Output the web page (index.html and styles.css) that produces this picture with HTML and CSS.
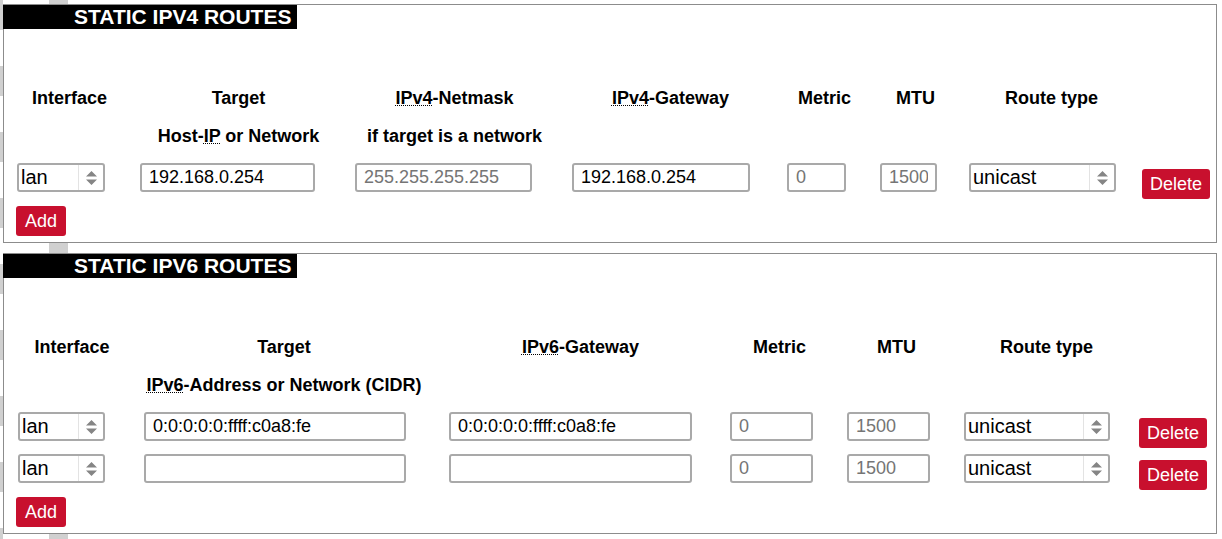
FILE: index.html
```html
<!DOCTYPE html>
<html lang="en">
<head>
<meta charset="utf-8">
<title>Static Routes</title>
<link rel="stylesheet" href="styles.css">
</head>
<body>
<div class="page">
  <section class="box">
    <h2 class="legend">STATIC IPV4 ROUTES</h2>
    <div class="grid g4">
      <div class="th">Interface</div>
      <div class="th">Target</div>
      <div class="th"><abbr title="Internet Protocol Version 4">IPv4</abbr>-Netmask</div>
      <div class="th"><abbr title="Internet Protocol Version 4">IPv4</abbr>-Gateway</div>
      <div class="th">Metric</div>
      <div class="th">MTU</div>
      <div class="th th-rt4">Route type</div>
      <div class="th"></div>

      <div class="th"></div>
      <div class="th">Host-<abbr title="Internet Protocol Address">IP</abbr> or Network</div>
      <div class="th">if target is a network</div>
      <div class="th"></div>
      <div class="th"></div>
      <div class="th"></div>
      <div class="th"></div>
      <div class="th"></div>

      <div class="sel w-if4"><span class="sel-val">lan</span><span class="sel-arr"><svg width="11" height="16" viewBox="0 0 11 16"><path d="M0 6.5 L5.5 1 L11 6.5 Z M0 9.5 L11 9.5 L5.5 15 Z" fill="#858585"/></svg></span></div>
      <input class="inp w-t4" type="text" value="192.168.0.254">
      <input class="inp w-nm4" type="text" placeholder="255.255.255.255">
      <input class="inp w-gw4" type="text" value="192.168.0.254">
      <input class="inp w-m4" type="text" placeholder="0">
      <input class="inp w-mtu4" type="text" placeholder="1500">
      <div class="sel w-rt4"><span class="sel-val">unicast</span><span class="sel-arr"><svg width="11" height="16" viewBox="0 0 11 16"><path d="M0 6.5 L5.5 1 L11 6.5 Z M0 9.5 L11 9.5 L5.5 15 Z" fill="#858585"/></svg></span></div>
      <button class="btn btn-del" type="button">Delete</button>
    </div>
    <div class="actions"><button class="btn btn-add" type="button">Add</button></div>
  </section>

  <section class="box">
    <h2 class="legend">STATIC IPV6 ROUTES</h2>
    <div class="grid g6">
      <div class="th">Interface</div>
      <div class="th th-t6">Target</div>
      <div class="th"><abbr title="Internet Protocol Version 6">IPv6</abbr>-Gateway</div>
      <div class="th">Metric</div>
      <div class="th">MTU</div>
      <div class="th th-rt6">Route type</div>
      <div class="th"></div>

      <div class="th"></div>
      <div class="th th-t6"><abbr title="Internet Protocol Version 6">IPv6</abbr>-Address or Network (CIDR)</div>
      <div class="th"></div>
      <div class="th"></div>
      <div class="th"></div>
      <div class="th"></div>
      <div class="th"></div>

      <div class="sel w-if6"><span class="sel-val">lan</span><span class="sel-arr"><svg width="11" height="16" viewBox="0 0 11 16"><path d="M0 6.5 L5.5 1 L11 6.5 Z M0 9.5 L11 9.5 L5.5 15 Z" fill="#858585"/></svg></span></div>
      <input class="inp w-t6" type="text" value="0:0:0:0:0:ffff:c0a8:fe">
      <input class="inp w-gw6" type="text" value="0:0:0:0:0:ffff:c0a8:fe">
      <input class="inp w-m6" type="text" placeholder="0">
      <input class="inp w-mtu6" type="text" placeholder="1500">
      <div class="sel w-rt6"><span class="sel-val">unicast</span><span class="sel-arr"><svg width="11" height="16" viewBox="0 0 11 16"><path d="M0 6.5 L5.5 1 L11 6.5 Z M0 9.5 L11 9.5 L5.5 15 Z" fill="#858585"/></svg></span></div>
      <button class="btn btn-del" type="button">Delete</button>

      <div class="sel w-if6"><span class="sel-val">lan</span><span class="sel-arr"><svg width="11" height="16" viewBox="0 0 11 16"><path d="M0 6.5 L5.5 1 L11 6.5 Z M0 9.5 L11 9.5 L5.5 15 Z" fill="#858585"/></svg></span></div>
      <input class="inp w-t6" type="text" value="">
      <input class="inp w-gw6" type="text" value="">
      <input class="inp w-m6" type="text" placeholder="0">
      <input class="inp w-mtu6" type="text" placeholder="1500">
      <div class="sel w-rt6"><span class="sel-val">unicast</span><span class="sel-arr"><svg width="11" height="16" viewBox="0 0 11 16"><path d="M0 6.5 L5.5 1 L11 6.5 Z M0 9.5 L11 9.5 L5.5 15 Z" fill="#858585"/></svg></span></div>
      <button class="btn btn-del" type="button">Delete</button>
    </div>
    <div class="actions"><button class="btn btn-add" type="button">Add</button></div>
  </section>
</div>
</body>
</html>
```

FILE: styles.css
```css
* {
  box-sizing: border-box;
}

html {
  min-height: 100%;
  background-color: #fff;
  background-image:
    linear-gradient(to right, transparent 49px, #d0d0d0 49px, #d0d0d0 68px, transparent 68px),
    repeating-linear-gradient(to bottom, #d0d0d0 0, #d0d0d0 30px, #fff 30px, #fff 66px);
  background-size: 100% 100%, 3px 100%;
  background-repeat: no-repeat;
}

body {
  margin: 0;
  font-family: "Liberation Sans", Arial, sans-serif;
  color: #000;
}

.page {
  padding: 4px 5px 0 3px;
}

.box {
  border: 1px solid #8c8c8c;
  background: #fff;
}

.box + .box {
  margin-top: 10px;
}

.legend {
  width: max-content;
  height: 24px;
  margin: 0 0 0 -1px;
  padding: 0 6px 0 71px;
  background: #000;
  color: #fff;
  font-size: 21px;
  font-weight: bold;
  line-height: 24px;
}

.grid {
  display: grid;
  column-gap: 18px;
  row-gap: 13px;
  align-items: center;
  justify-items: start;
  padding: 58px 0 0 13px;
}

.g4 {
  grid-template-columns: 105px 197px 199px 197px 75px 71px 155px auto;
}

.g6 {
  grid-template-columns: 108px 287px 263px 99px 99px 157px auto;
  padding-left: 14px;
}

.th {
  justify-self: stretch;
  margin-bottom: 3px;
  font-size: 18px;
  font-weight: bold;
  line-height: 22px;
  text-align: center;
  white-space: nowrap;
}

.th-rt4 {
  padding-left: 10px;
}

.th-rt6 {
  padding-left: 8px;
}

.th-t6 {
  padding-right: 7px;
}

abbr {
  text-decoration: underline dotted;
  text-decoration-thickness: 1px;
}

.inp {
  height: 29px;
  margin: 0;
  padding: 0 7px;
  border: 2px solid #a9a9a9;
  border-radius: 3px;
  background: #fff;
  color: #000;
  font: 18px "Liberation Sans", Arial, sans-serif;
}

.inp::placeholder {
  color: #757575;
  opacity: 1;
}

.sel {
  display: flex;
  align-items: stretch;
  height: 29px;
  border: 2px solid #a9a9a9;
  border-radius: 3px;
  background: #fff;
  font-size: 20px;
}

.sel-val {
  flex: 1;
  padding-left: 2px;
  line-height: 25px;
  white-space: nowrap;
}

.sel-arr {
  display: flex;
  align-items: center;
  justify-content: center;
  width: 25px;
  border-left: 1px solid #e3e3e3;
}

.w-if4 { width: 88px; }
.w-t4 { width: 175px; }
.w-nm4 { width: 177px; }
.w-gw4 { width: 178px; }
.w-m4 { width: 59px; }
.w-mtu4 { width: 57px; }
.w-rt4 { width: 147px; }

.w-if6 { width: 87px; }
.w-t6 { width: 262px; }
.w-gw6 { width: 243px; }
.w-m6 { width: 83px; }
.w-mtu6 { width: 83px; }
.w-rt6 { width: 146px; }

.btn {
  height: 30px;
  margin: 0;
  padding: 0 8px;
  border: 0;
  border-radius: 3px;
  background: #c8102e;
  color: #fff;
  font: 18px "Liberation Sans", Arial, sans-serif;
}

.btn-add {
  padding: 0 9px;
}

.btn-del {
  align-self: start;
  margin-top: 6px;
  margin-bottom: -7px;
}

.actions {
  display: flex;
  padding: 14px 0 6px 12px;
}
```
